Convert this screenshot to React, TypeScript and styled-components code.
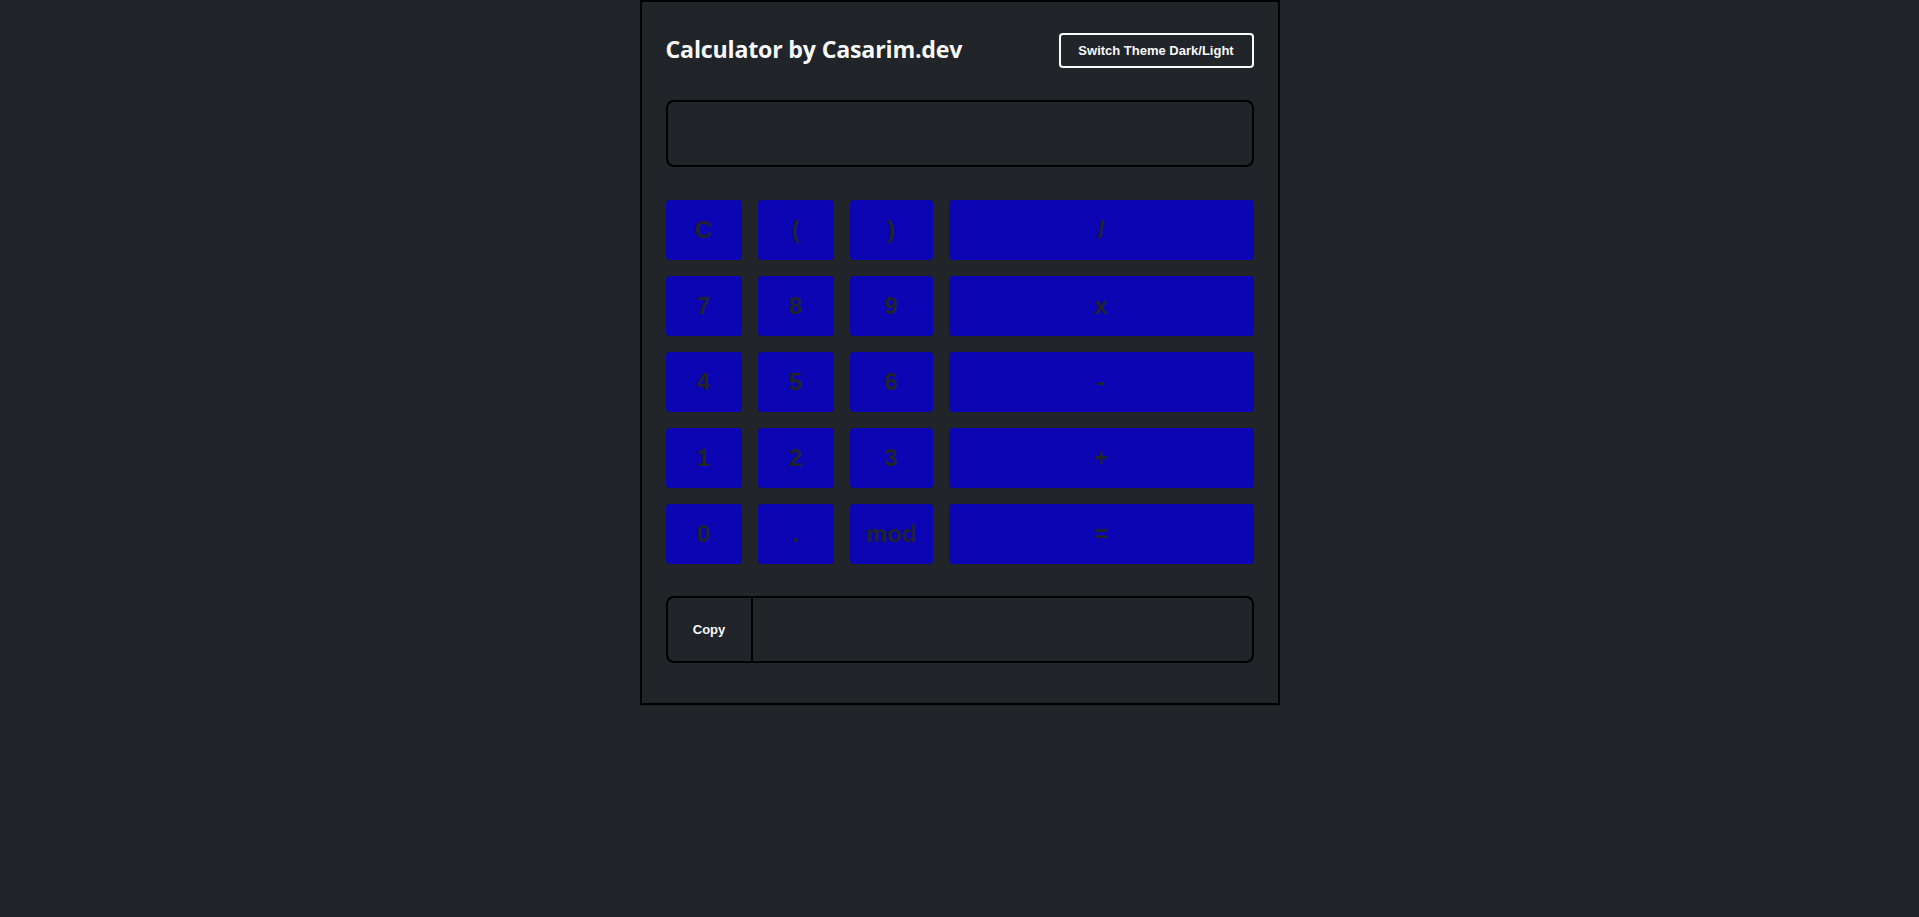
import React from "react";
import styled, { createGlobalStyle } from "styled-components";

const GlobalStyle = createGlobalStyle`
  html, body {
    margin: 0;
    padding: 0;
    background: #212429;
    font-family: "Liberation Sans", Arial, sans-serif;
  }
  * { box-sizing: border-box; }
`;

const Page = styled.div`
  display: flex;
  justify-content: center;
  min-height: 917px;
  background: #212429;
`;

const Card = styled.div`
  width: 640px;
  height: 705px;
  border: 2px solid #000;
  padding: 31px 24px 40px;
  display: flex;
  flex-direction: column;
`;

const Header = styled.div`
  display: flex;
  align-items: center;
  justify-content: space-between;
  height: 35px;
`;

const Title = styled.h1`
  margin: -1px 0 0;
  font-family: "Open Sans", "Noto Sans", sans-serif;
  font-weight: 700;
  font-size: 23.2px;
  line-height: 1.2;
  letter-spacing: -0.2px;
  color: #f8f9fa;
`;

const ThemeButton = styled.button`
  width: 195px;
  height: 35px;
  background: transparent;
  border: 2px solid #f8f9fa;
  border-radius: 4px;
  color: #f8f9fa;
  font-family: "Liberation Sans", Arial, sans-serif;
  font-weight: 700;
  font-size: 13px;
  cursor: pointer;
`;

const Display = styled.div`
  margin-top: 32px;
  height: 67px;
  border: 2px solid #000;
  border-radius: 8px;
`;

const Keypad = styled.div`
  margin-top: 33px;
  display: grid;
  grid-template-columns: 76px 76px 83px 1fr;
  grid-auto-rows: 60px;
  gap: 16px;
`;

const Key = styled.button`
  border: none;
  border-radius: 4px;
  background: #0b05b3;
  color: #212429;
  font-family: "Liberation Sans", Arial, sans-serif;
  font-weight: 700;
  font-size: 24px;
  padding: 0;
  cursor: pointer;
`;

const CopyRow = styled.div`
  margin-top: 32px;
  height: 67px;
  border: 2px solid #000;
  border-radius: 8px;
  display: flex;
  overflow: hidden;
`;

const CopyButton = styled.button`
  width: 85px;
  background: transparent;
  border: none;
  border-right: 2px solid #000;
  color: #f8f9fa;
  font-family: "Liberation Sans", Arial, sans-serif;
  font-weight: 700;
  font-size: 13px;
  cursor: pointer;
`;

const CopyField = styled.div`
  flex: 1;
`;

const keys = [
  "C", "(", ")", "/",
  "7", "8", "9", "x",
  "4", "5", "6", "-",
  "1", "2", "3", "+",
  "0", ".", "mod", "=",
];

export default function App() {
  return (
    <>
      <GlobalStyle />
      <Page>
        <Card>
          <Header>
            <Title>Calculator by Casarim.dev</Title>
            <ThemeButton>Switch Theme Dark/Light</ThemeButton>
          </Header>
          <Display />
          <Keypad>
            {keys.map((k) => (
              <Key key={k}>{k}</Key>
            ))}
          </Keypad>
          <CopyRow>
            <CopyButton>Copy</CopyButton>
            <CopyField />
          </CopyRow>
        </Card>
      </Page>
    </>
  );
}
